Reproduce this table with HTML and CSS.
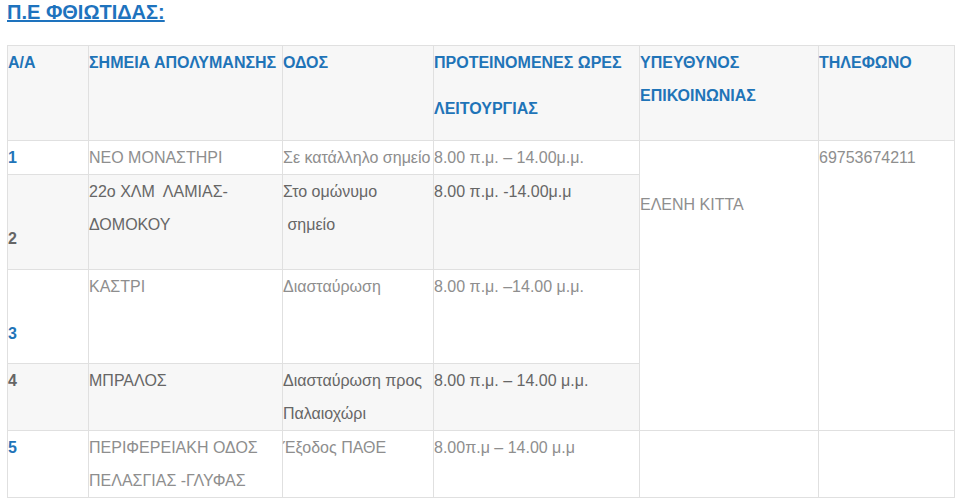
FILE: index.html
```html
<!DOCTYPE html>
<html lang="el">
<head>
<meta charset="utf-8">
<title>Π.Ε ΦΘΙΩΤΙΔΑΣ</title>
<link rel="stylesheet" href="styles.css">
</head>
<body>
<div class="page">
  <h2 class="title">Π.Ε ΦΘΙΩΤΙΔΑΣ:</h2>
  <table class="points">
    <colgroup>
      <col class="c1"><col class="c2"><col class="c3"><col class="c4"><col class="c5"><col class="c6">
    </colgroup>
    <thead>
      <tr class="r-head">
        <th>Α/Α</th>
        <th class="nowrap">ΣΗΜΕΙΑ ΑΠΟΛΥΜΑΝΣΗΣ</th>
        <th>ΟΔΟΣ</th>
        <th>ΠΡΟΤΕΙΝΟΜΕΝΕΣ ΩΡΕΣ <span class="gap-line">ΛΕΙΤΟΥΡΓΙΑΣ</span></th>
        <th>ΥΠΕΥΘΥΝΟΣ ΕΠΙΚΟΙΝΩΝΙΑΣ</th>
        <th>ΤΗΛΕΦΩΝΟ</th>
      </tr>
    </thead>
    <tbody>
      <tr class="r1 odd">
        <td class="num">1</td>
        <td>ΝΕΟ ΜΟΝΑΣΤΗΡΙ</td>
        <td class="nowrap">Σε κατάλληλο σημείο</td>
        <td>8.00 π.μ. – 14.00μ.μ.</td>
        <td rowspan="4" class="low">ΕΛΕΝΗ ΚΙΤΤΑ</td>
        <td rowspan="4">69753674211</td>
      </tr>
      <tr class="r2 even">
        <td class="num low">2</td>
        <td>22ο ΧΛΜ&nbsp; ΛΑΜΙΑΣ-ΔΟΜΟΚΟΥ</td>
        <td>Στο ομώνυμο<br>&nbsp;σημείο</td>
        <td>8.00 π.μ. -14.00μ.μ</td>
      </tr>
      <tr class="r3 odd">
        <td class="num low">3</td>
        <td>ΚΑΣΤΡΙ</td>
        <td>Διασταύρωση</td>
        <td>8.00 π.μ. –14.00 μ.μ.</td>
      </tr>
      <tr class="r4 even">
        <td class="num">4</td>
        <td>ΜΠΡΑΛΟΣ</td>
        <td>Διασταύρωση προς Παλαιοχώρι</td>
        <td>8.00 π.μ. – 14.00 μ.μ.</td>
      </tr>
      <tr class="r5 odd">
        <td class="num">5</td>
        <td>ΠΕΡΙΦΕΡΕΙΑΚΗ ΟΔΟΣ ΠΕΛΑΣΓΙΑΣ -ΓΛΥΦΑΣ</td>
        <td>Έξοδος ΠΑΘΕ</td>
        <td>8.00π.μ – 14.00 μ.μ</td>
        <td></td>
        <td></td>
      </tr>
    </tbody>
  </table>
</div>
</body>
</html>
```
FILE: styles.css
```css
html, body {
  margin: 0;
  padding: 0;
  background: #ffffff;
}

.page {
  padding: 0 0 0 7px;
  font-family: "Liberation Sans", Arial, sans-serif;
  font-size: 16px;
}

.title {
  margin: 0;
  padding-top: 1px;
  height: 44px;
  font-size: 20px;
  line-height: 22px;
  font-weight: bold;
  color: #1e73be;
  text-decoration: underline;
}

.points {
  width: 948px;
  table-layout: fixed;
  border-collapse: separate;
  border-spacing: 0;
  border-left: 1px solid #e0e0e0;
  border-top: 1px solid #e0e0e0;
  line-height: 33px;
}

.c1 { width: 81px; }
.c2 { width: 194px; }
.c3 { width: 151px; }
.c4 { width: 206px; }
.c5 { width: 179px; }
.c6 { width: 136px; }

.points th,
.points td {
  box-sizing: border-box;
  border-right: 1px solid #e0e0e0;
  border-bottom: 1px solid #e0e0e0;
  padding: 0;
  vertical-align: top;
  text-align: left;
}

.points th {
  color: #1f74b8;
  font-weight: bold;
  background: #f7f7f7;
}

.points td {
  color: #8e8e8e;
}

.points tr.even td {
  background: #f7f7f7;
  color: #666666;
}

.points td.num {
  color: #1f74b8;
  font-weight: bold;
}

.gap-line {
  display: block;
  padding-top: 13px;
}

.nowrap {
  white-space: nowrap;
}

.points td.low {
  padding-top: 47px;
}

.r-head { height: 95px; }
.r1 { height: 34px; }
.r2 { height: 95px; }
.r3 { height: 94px; }
.r4 { height: 67px; }
.r5 { height: 67px; }
```
